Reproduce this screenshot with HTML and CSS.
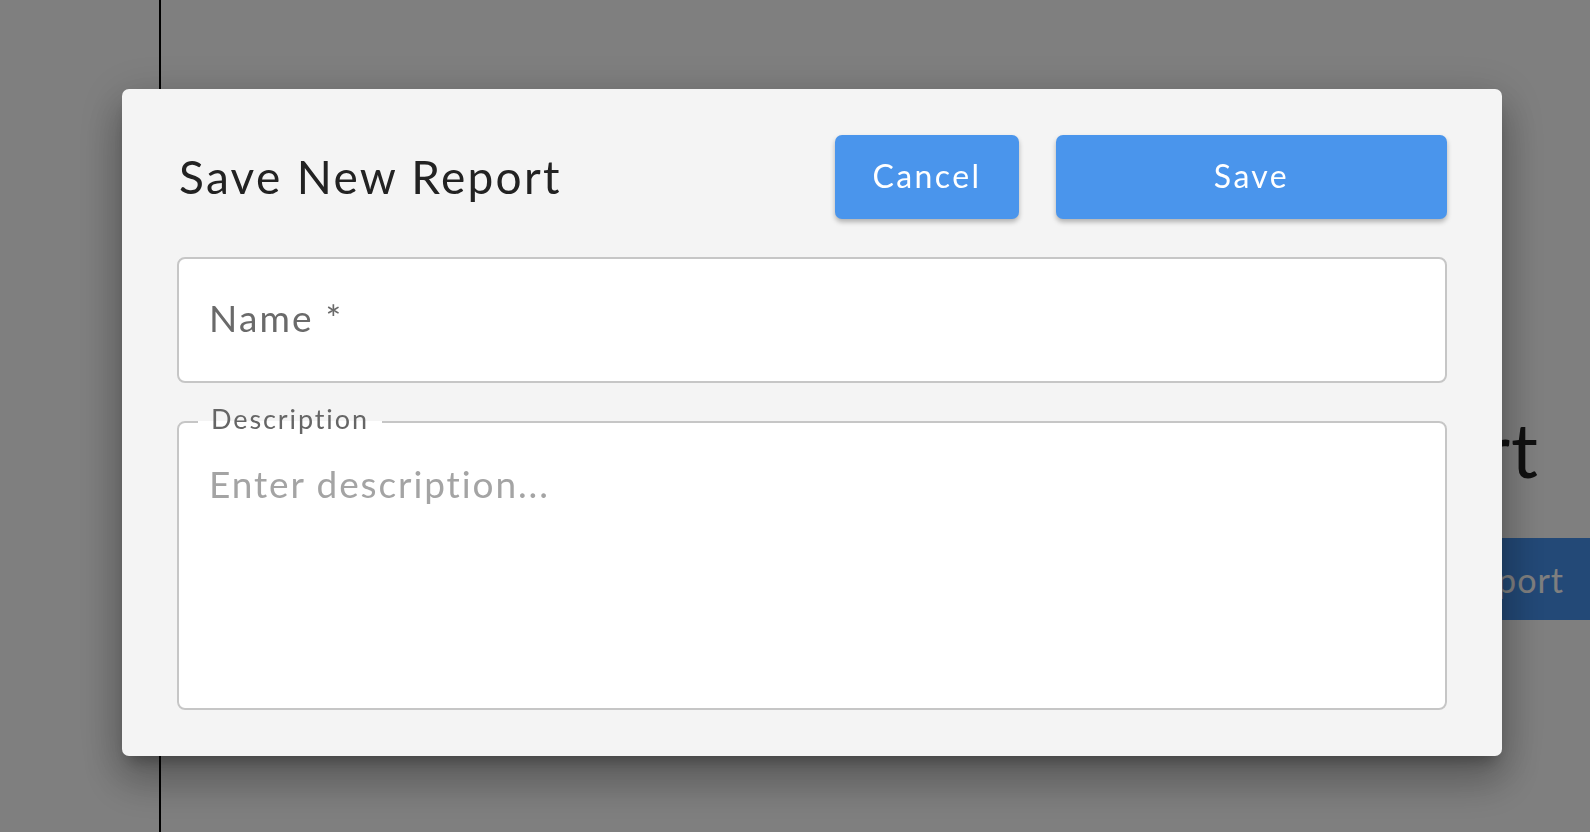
FILE: index.html
```html
<!DOCTYPE html>
<html lang="en">
<head>
  <meta charset="UTF-8" />
  <meta name="viewport" content="width=device-width, initial-scale=1.0"/>
  <title>Reports - Save New Report</title>
  <link rel="stylesheet" href="styles.css">
</head>
<body>

  <div class="page">
    <!-- Side navigation -->
    <div class="sidebar"></div>

    <!-- Page content behind the dialog -->
    <div class="main-content">
      <h1 class="page-title">Report</h1>
      <div class="page-actions">
        <button class="page-btn">New Report</button>
      </div>
    </div>
  </div>

  <!-- Save dialog -->
  <div class="backdrop">
    <div class="dialog">
      <div class="dialog-header">
        <h2 class="dialog-title">Save New Report</h2>
        <button class="btn btn-cancel">Cancel</button>
        <button class="btn btn-save">Save</button>
      </div>

      <input type="text" class="name-input" placeholder="Name *">

      <fieldset class="desc-field">
        <legend>Description</legend>
        <textarea class="desc-input" placeholder="Enter description..."></textarea>
      </fieldset>
    </div>
  </div>

</body>
</html>
```

FILE: styles.css
```css
body {
  font-family: Lato, "Noto Sans", sans-serif;
  margin: 0;
  padding: 0;
  background: #fff;
  overflow: hidden;
}

.page {
  display: flex;
  height: 100vh;
}

.sidebar {
  width: 159px;
  border-right: 2px solid #000;
}

.main-content {
  flex: 1;
  padding-top: 404px;
}

.page-title {
  font-size: 75px;
  font-weight: 400;
  color: #222;
  text-align: right;
  margin: 0 51px 0 0;
  line-height: 90px;
  letter-spacing: 1px;
}

.page-actions {
  display: flex;
  justify-content: flex-end;
  margin-top: 44px;
}

.page-btn {
  font-family: inherit;
  font-size: 34px;
  letter-spacing: 1px;
  color: #fff;
  background: #4692ee;
  border: none;
  height: 82px;
  padding: 0 26px 0 40px;
}

.backdrop {
  position: fixed;
  inset: 0;
  background: rgba(0, 0, 0, 0.5);
  display: flex;
  align-items: flex-start;
  padding: 89px 0 0 122px;
}

.dialog {
  width: 1380px;
  box-sizing: border-box;
  background: #f4f4f4;
  border-radius: 7px;
  padding: 46px 55px 46px 55px;
  box-shadow: 0 11px 15px -7px rgba(0, 0, 0, 0.3),
              0 24px 40px 4px rgba(0, 0, 0, 0.22),
              0 9px 46px 8px rgba(0, 0, 0, 0.12);
}

.dialog-header {
  display: flex;
  align-items: center;
  gap: 37px;
  margin-bottom: 38px;
}

.dialog-title {
  flex: 1;
  margin: 0;
  padding: 0 0 2px 2px;
  font-size: 46px;
  font-weight: 400;
  color: #222;
  letter-spacing: 2.3px;
}

.btn {
  font-family: inherit;
  font-size: 32px;
  letter-spacing: 2.4px;
  color: #fff;
  background: #4a95ec;
  border: none;
  border-radius: 7px;
  height: 84px;
  padding: 0 0 4px;
  box-shadow: 0 3px 5px rgba(0, 0, 0, 0.28);
}

.btn-cancel {
  width: 184px;
}

.btn-save {
  width: 391px;
}

.name-input {
  display: block;
  width: 100%;
  height: 126px;
  box-sizing: border-box;
  border: 2px solid #c6c6c6;
  border-radius: 8px;
  background: #fff;
  padding: 0 30px 6px;
  font-family: inherit;
  font-size: 37px;
  letter-spacing: 2.2px;
  color: #333;
  outline: none;
}

.name-input::placeholder {
  color: #6a6a6a;
}

.desc-field {
  margin: 21px 0 0;
  padding: 0;
  border: 2px solid #c6c6c6;
  border-radius: 8px;
  background: #fff;
}

.desc-field legend {
  margin-left: 19px;
  padding: 0 13px 6px;
  font-size: 27px;
  letter-spacing: 1.9px;
  color: #666;
  line-height: 30px;
}

.desc-input {
  display: block;
  width: 100%;
  height: 268px;
  box-sizing: border-box;
  border: none;
  resize: none;
  background: transparent;
  padding: 21px 30px 0;
  font-family: inherit;
  font-size: 37px;
  letter-spacing: 1.9px;
  color: #333;
  outline: none;
}

.desc-input::placeholder {
  color: #a4a4a4;
}
```
